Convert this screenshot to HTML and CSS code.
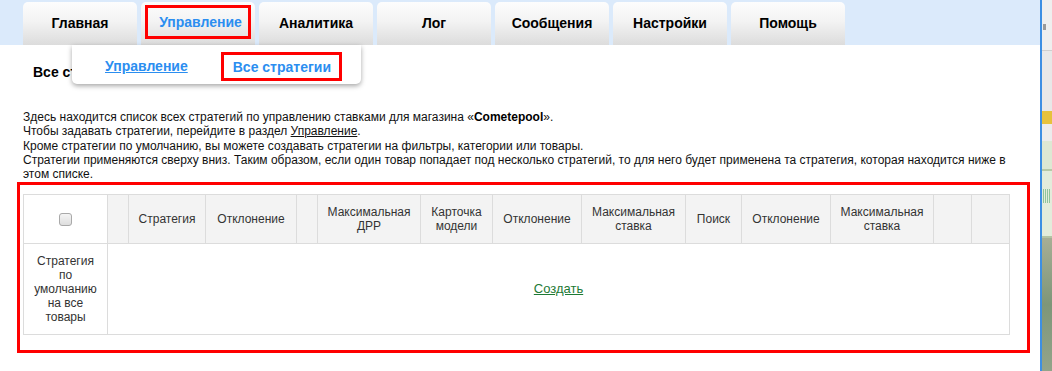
FILE: index.html
```html
<!DOCTYPE html>
<html lang="ru">
<head>
    <meta charset="UTF-8">
    <title>Все стратегии</title>
    <link rel="stylesheet" href="styles.css">
</head>
<body>
    <div class="screen">
        <div class="page">
            <div class="nav">
                <div class="tab">Главная</div>
                <div class="tab active"><span class="mark">Управление</span></div>
                <div class="tab">Аналитика</div>
                <div class="tab">Лог</div>
                <div class="tab">Сообщения</div>
                <div class="tab">Настройки</div>
                <div class="tab">Помощь</div>
            </div>

            <div class="submenu">
                <a class="sub-link" href="#">Управление</a>
                <span class="sub-mark">Все стратегии</span>
            </div>

            <h2 class="title">Все стратегии</h2>

            <p class="intro">
                Здесь находится список всех стратегий по управлению ставками для магазина «<b>Cometepool</b>».<br>
                Чтобы задавать стратегии, перейдите в раздел <a class="plain" href="#">Управление</a>.<br>
                Кроме стратегии по умолчанию, вы можете создавать стратегии на фильтры, категории или товары.<br>
                Стратегии применяются сверху вниз. Таким образом, если один товар попадает под несколько стратегий, то для него будет применена та стратегия, которая находится ниже в этом списке.
            </p>

            <div class="frame">
                <table class="grid">
                    <colgroup>
                        <col style="width:84px"><col style="width:21px"><col style="width:77px">
                        <col style="width:91px"><col style="width:21px"><col style="width:103px">
                        <col style="width:72px"><col style="width:89px"><col style="width:104px">
                        <col style="width:56px"><col style="width:89px"><col style="width:103px">
                        <col style="width:38px"><col style="width:38px">
                    </colgroup>
                    <thead>
                        <tr>
                            <th class="check"><span class="box"></span></th>
                            <th></th>
                            <th>Стратегия</th>
                            <th>Отклонение</th>
                            <th></th>
                            <th>Максимальная ДРР</th>
                            <th>Карточка модели</th>
                            <th>Отклонение</th>
                            <th>Максимальная ставка</th>
                            <th>Поиск</th>
                            <th>Отклонение</th>
                            <th>Максимальная ставка</th>
                            <th></th>
                            <th></th>
                        </tr>
                    </thead>
                    <tbody>
                        <tr>
                            <td class="name">Стратегия по умолчанию на все товары</td>
                            <td colspan="13" class="empty"><a class="create" href="#">Создать</a></td>
                        </tr>
                    </tbody>
                </table>
            </div>
        </div>

        <div class="side">
            <div class="s1"><span class="knob"></span></div>
            <div class="s2"></div>
            <div class="s3"></div>
            <div class="s4"></div>
            <div class="s5"></div>
            <div class="s6"><span class="bars"></span></div>
            <div class="s7"></div>
        </div>
    </div>
</body>
</html>
```

FILE: styles.css
```css
body {
    margin: 0;
    font-family: "Liberation Sans", Arial, sans-serif;
    font-size: 12px;
    color: #111;
    background: #fff;
}
.screen {
    display: flex;
    width: 1052px;
    height: 371px;
    overflow: hidden;
}
.page {
    width: 1040px;
    position: relative;
}

/* tabs */
.nav {
    height: 45px;
    box-sizing: border-box;
    padding: 2px 0 0 23px;
    background: #dbeafb;
    display: flex;
    gap: 4px;
}
.tab {
    width: 114px;
    height: 43px;
    padding-bottom: 1px;
    box-sizing: border-box;
    border-radius: 5px 5px 0 0;
    background: linear-gradient(#fdfdfd, #f3f3f3 45%, #dcdcdc);
    display: flex;
    align-items: center;
    justify-content: center;
    font-size: 14px;
    font-weight: bold;
    color: #000;
}
.tab.active {
    align-items: flex-start;
    padding: 3px 0 0;
    color: #2b8ef0;
}
.mark {
    display: block;
    height: 28px;
    line-height: 28px;
    padding: 0 6px 0 11px;
    border: 3px solid #f00;
}

/* dropdown under the active tab */
.submenu {
    position: absolute;
    left: 72px;
    top: 45px;
    width: 289px;
    height: 39px;
    box-sizing: border-box;
    padding-left: 33px;
    display: flex;
    align-items: center;
    background: #fff;
    border-radius: 0 0 5px 5px;
    box-shadow: 0 2px 5px rgba(0, 0, 0, 0.35);
    font-size: 14px;
    font-weight: bold;
    color: #2b8ef0;
    z-index: 2;
}
.sub-link {
    color: #2b8ef0;
    text-decoration: underline;
    margin-top: 2px;
}
.sub-mark {
    margin-left: 33px;
    height: 23px;
    line-height: 24px;
    padding: 0 8px 0 9px;
    border: 3px solid #f00;
    margin-top: 3px;
}

/* heading, mostly hidden under the dropdown */
.title {
    margin: 19px 0 0 33px;
    width: 39px;
    overflow: hidden;
    white-space: nowrap;
    font-size: 14px;
    line-height: 16px;
    color: #000;
}

.intro {
    margin: 30px 0 0 23px;
    width: 988px;
    line-height: 14.3px;
    color: #111;
}
.intro b {
    color: #000;
}
.plain {
    color: #111;
    text-decoration: underline;
}

/* highlighted table block */
.frame {
    margin: 1px 0 0 17px;
    width: 1013px;
    height: 171px;
    box-sizing: border-box;
    padding: 9px 18px 14px 3px;
    border: 3px solid #f00;
}
.grid {
    width: 986px;
    table-layout: fixed;
    border-collapse: collapse;
    border: 1px solid #dcdcdc;
    color: #333;
}
.grid th,
.grid td {
    border: 1px solid #dcdcdc;
    padding: 4px 5px;
    text-align: center;
    vertical-align: middle;
    line-height: 14px;
}
.grid th {
    height: 40px;
    background: #f3f3f3;
    font-weight: normal;
}
.grid th.check {
    background: #fff;
}
.box {
    display: inline-block;
    width: 11px;
    height: 11px;
    margin-top: 3px;
    border: 1px solid #a9a9a9;
    border-radius: 3px;
    background: linear-gradient(#f4f4f4, #dedede);
}
.grid td {
    height: 82px;
    background: #fff;
}
.create {
    color: #1d7a35;
    font-size: 13px;
    text-decoration: underline;
}

/* edge of the neighbouring window */
.side {
    width: 10px;
    border-left: 2px solid #3d8fe3;
    display: flex;
    flex-direction: column;
}
.s1 { height: 50px; background: #efefef; position: relative; }
.knob { position: absolute; left: 1px; top: 24px; width: 3px; height: 6px; background: #9a9a9a; }
.s2 { height: 60px; background: #e8e8e8; border-top: 1px solid #cfcfcf; }
.s3 { height: 13px; background: #e6c23c; }
.s4 { height: 17px; background: #ececec; }
.s5 { height: 28px; background: #dde8d3; border-bottom: 2px solid #b7c9a7; }
.s6 { height: 65px; background: #e3ecdb; border-bottom: 2px solid #b4c4a4; position: relative; }
.bars { position: absolute; left: 1px; top: 18px; width: 7px; height: 14px; background: repeating-linear-gradient(90deg, #8fc49b 0 1px, transparent 1px 2px); }
.s7 { flex: 1; background: linear-gradient(#a7ae95, #7e9679 50%, #93a48a); }
```
